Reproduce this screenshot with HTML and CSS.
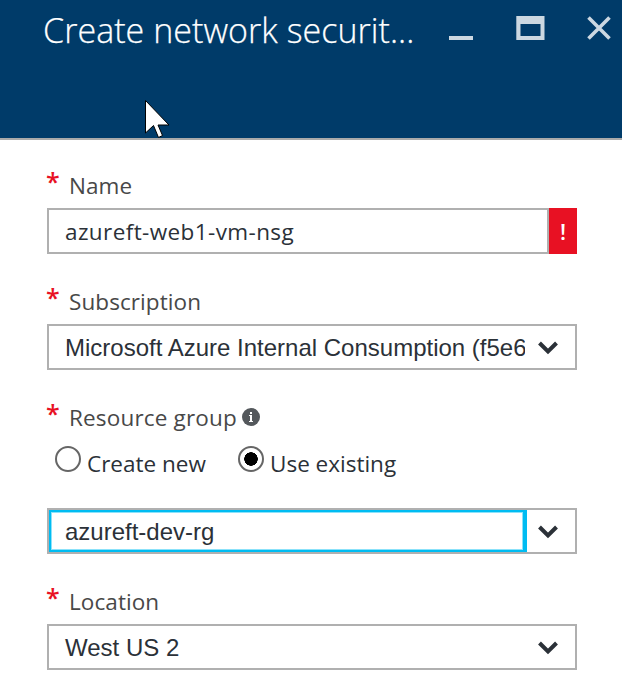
FILE: index.html
```
<!DOCTYPE html>
<html lang="en">
<head>
<meta charset="utf-8">
<title>Create network security group</title>
<link rel="stylesheet" href="styles.css">
</head>
<body>
<header class="header">
  <h1 class="title">Create network securit...</h1>
  <div class="controls">
    <svg width="24" height="24" viewBox="0 0 24 24"><path fill="#ccd8e2" d="M0 20h24v4H0z"/></svg>
    <svg width="29" height="24" viewBox="0 0 29 24"><path fill="#ccd8e2" fill-rule="evenodd" d="M.3 0h28.2v24H.3zM4.5 8v12h20V8z"/></svg>
    <svg width="24" height="24" viewBox="0 0 24 24"><path fill="none" stroke="#ccd8e2" stroke-width="3.6" d="M1.500 1.500l21 21M22.500 1.500l-21 21"/></svg>
  </div>
  <svg class="cursor" width="26" height="40" viewBox="0 0 26 40"><path fill="#fff" stroke="#000" d="M.5.5v32.500l8-7.500 5 12 4-2-4.500-10.500h11z"/></svg>
</header>
<main class="form">
  <section class="group">
    <div class="label"><span class="star">*</span><span class="name">Name</span></div>
    <div class="field invalid"><span class="value web">azureft-web1-vm-nsg</span><span class="error">!</span></div>
  </section>
  <section class="group">
    <div class="label"><span class="star">*</span><span class="subscription">Subscription</span></div>
    <div class="field"><span class="value clipped">Microsoft Azure Internal Consumption (f5e6</span><svg class="chevron" width="20" height="14" viewBox="0 0 20 14"><path d="M1.500 2L10 10.500 18.500 2"/></svg></div>
  </section>
  <section class="group resource">
    <div class="label"><span class="star">*</span><span class="rg">Resource group</span><svg class="info" width="18" height="18" viewBox="0 0 18 18"><circle cx="9" cy="9" r="9" fill="#54585c"/><path fill="#fff" d="M8 4h2v2H8zM7 7h3v6h1v1H7v-1h1V8H7z"/></svg></div>
    <div class="options">
      <div class="option"><span class="radio"></span><span class="create">Create new</span></div>
      <div class="option"><span class="radio checked"></span><span class="existing">Use existing</span></div>
    </div>
    <div class="field combo"><span class="value focused">azureft-dev-rg</span><svg class="chevron" width="20" height="14" viewBox="0 0 20 14"><path d="M1.500 2L10 10.500 18.500 2"/></svg></div>
  </section>
  <section class="group">
    <div class="label"><span class="star">*</span><span class="location">Location</span></div>
    <div class="field"><span class="value">West US 2</span><svg class="chevron" width="20" height="14" viewBox="0 0 20 14"><path d="M1.500 2L10 10.500 18.500 2"/></svg></div>
  </section>
</main>
</body>
</html>
```
FILE: styles.css
```
* { box-sizing: border-box; }
body { margin: 0; background: #fff; color: #2b3138; font-family: "Open Sans", "Noto Sans", sans-serif; }
svg { display: block; flex: none; }
.header { position: relative; display: flex; align-items: flex-start; height: 140px; padding-left: 43px; background: #003b69; border-bottom: 2px solid #aaa; }
.title { margin: 6px 0 0; width: 406px; font-size: 34px; line-height: 48px; font-weight: 300; letter-spacing: .04px; color: #fff; white-space: nowrap; -webkit-text-stroke: .25px #fff; }
.controls { display: flex; padding-top: 16px; }
.controls svg + svg { margin-left: 43px; }
.controls svg:last-child { margin-left: 42px; }
.cursor { position: absolute; left: 145px; top: 100px; }
.form { padding: 24px 45px 0 47px; }
.group { margin-bottom: 26px; }
.label { display: flex; height: 44px; font-size: 22.5px; line-height: 44px; color: #484848; white-space: nowrap; }
.name, .subscription, .location { letter-spacing: .08px; }
.rg { letter-spacing: .17px; }
.star { width: 23px; height: 34px; margin-left: -1px; line-height: 34px; color: #e81123; font-size: 25px; font-weight: 600; }
.info { margin: 12px 0 0 5px; }
.field { display: flex; align-items: center; height: 46px; border: 2px solid #b0b0b0; font-family: "Liberation Sans", sans-serif; font-size: 24px; background: #fff; }
.value { width: 478px; padding: 2px 0 0 16px; line-height: 42px; overflow: hidden; white-space: nowrap; }
.clipped { width: 476px; margin-right: 2px; }
.web { padding-top: 0; font-family: "Open Sans", sans-serif; font-size: 22.5px; letter-spacing: .4px; line-height: 43px; }
.invalid { border-right: 0; }
.error { width: 28px; height: 46px; margin: -2px 0; background: #e81123; color: #fff; text-align: center; font: 600 22px/46px "Open Sans", sans-serif; flex: none; }
.invalid .value { width: 500px; height: 42px; border-right: 2px solid #b0b0b0; }
.chevron { margin: 2px 0 0 11px; }
.chevron path { fill: none; stroke: #2b3138; stroke-width: 4; }
.options { display: flex; height: 68px; padding-left: 8px; }
.option { display: flex; height: 48px; font-size: 22.5px; line-height: 48px; white-space: nowrap; }
.option:first-child { width: 183px; }
.radio { width: 26px; height: 26px; margin: 6px 6px 0 0; border: 2px solid #666; border-radius: 50%; background: #fff; }
.checked { background: radial-gradient(circle, #000 0 6.500px, #fff 7px); }
.focused { height: 42px; border: 2px solid #00bcf2; border-right-width: 4px; padding: 1px 0 0 14px; line-height: 38px; box-shadow: inset 0 0 0 1px #8be2fa; }
```
